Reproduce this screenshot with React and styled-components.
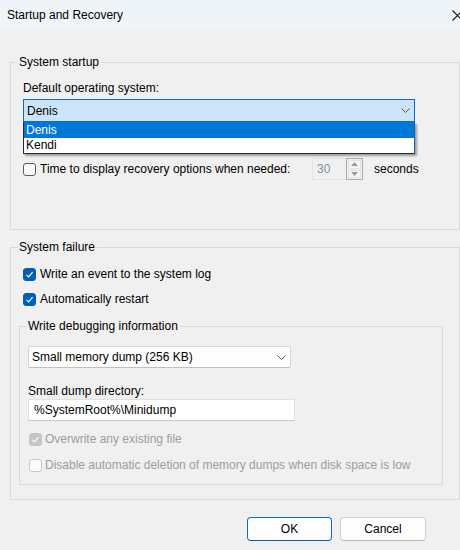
import React from 'react'
import styled, { createGlobalStyle } from 'styled-components';

const GlobalStyle = createGlobalStyle`
  body {
    margin: 0;
    font-family: "Segoe UI", "Liberation Sans", Arial, sans-serif;
    font-size: 12px;
    color: #000;
  }
`;

const Chevron = ({ color = '#555' }) => (
  <svg width="9" height="5" viewBox="0 0 9 5">
    <path d="M0.5 0.5 L4.5 4.5 L8.5 0.5" fill="none" stroke={color} strokeWidth="1" />
  </svg>
);

const Tick = ({ color = '#fff' }) => (
  <svg width="9" height="9" viewBox="0 0 9 9">
    <path d="M1.5 4.8 L3.6 6.9 L7.6 2.2" fill="none" stroke={color} strokeWidth="1.2" />
  </svg>
);

const Check = ({ checked, disabled }) => (
  <Box $checked={checked} $disabled={disabled}>
    {checked && <Tick />}
  </Box>
);

const Spin = ({ value }) => (
  <SpinBox>
    <SpinValue>{value}</SpinValue>
    <SpinButtons>
      <SpinBtn>
        <svg width="7" height="4" viewBox="0 0 7 4"><path d="M0 4 L3.5 0 L7 4 Z" fill="#9a9a9a" /></svg>
      </SpinBtn>
      <SpinBtn>
        <svg width="7" height="4" viewBox="0 0 7 4"><path d="M0 0 L3.5 4 L7 0 Z" fill="#9a9a9a" /></svg>
      </SpinBtn>
    </SpinButtons>
  </SpinBox>
);

const App = () => {
  const systems = ['Denis', 'Kendi'];
  return <Window>
    <GlobalStyle />
    <TitleBar>
      <span>Startup and Recovery</span>
      <svg width="11" height="11" viewBox="0 0 11 11">
        <path d="M0.5 0.5 L10.5 10.5 M10.5 0.5 L0.5 10.5" stroke="#1a1a1a" strokeWidth="1.2" />
      </svg>
    </TitleBar>

    <Body>
      <Group $width={450}>
        <Legend>System startup</Legend>
        <GroupContent $pad="10px 12px 49px 12px">
          <Label>Default operating system:</Label>
          <Combo>
            <ComboField>
              <span>Denis</span>
              <Chevron />
            </ComboField>
            <DropList>
              {systems.map((s, i) => (
                <DropItem key={s} $selected={i === 0}>{s}</DropItem>
              ))}
            </DropList>
          </Combo>

          {/* row hidden under the open list */}
          <Spacer $top={9} $h={22} />
          <Row $top={5} $h={22}>
            <Check />
            <RowLabel $width={268}>Time to display recovery options when needed:</RowLabel>
            <Spin value="30" />
            <Unit>seconds</Unit>
          </Row>
        </GroupContent>
      </Group>

      <Group $width={450} $top={9}>
        <Legend>System failure</Legend>
        <GroupContent $pad="9px 16px 14px 8px">
          <Row $top={0} $h={20} $indent={4}>
            <Check checked />
            <RowLabel>Write an event to the system log</RowLabel>
          </Row>
          <Row $top={5} $h={20} $indent={4}>
            <Check checked />
            <RowLabel>Automatically restart</RowLabel>
          </Row>

          <Group $top={9}>
            <Legend>Write debugging information</Legend>
            <GroupContent $pad="12px 8px 9px 8px">
              <Select>
                <span>Small memory dump (256 KB)</span>
                <Chevron />
              </Select>
              <Label $top={16} $lh={15}>Small dump directory:</Label>
              <TextInput>%SystemRoot%\Minidump</TextInput>
              <Row $top={8} $h={20} $indent={1} $gap={3} $disabled>
                <Check checked disabled />
                <RowLabel>Overwrite any existing file</RowLabel>
              </Row>
              <Row $top={6} $h={20} $indent={1} $gap={3} $disabled>
                <Check disabled />
                <RowLabel>Disable automatic deletion of memory dumps when disk space is low</RowLabel>
              </Row>
            </GroupContent>
          </Group>
        </GroupContent>
      </Group>

      <ButtonBar>
        <Button $default>OK</Button>
        <Button>Cancel</Button>
      </ButtonBar>
    </Body>
  </Window>
};

const Window = styled.div`
  width: 460px;
  height: 550px;
  overflow: hidden;
  background: #f0f0f0;
`;

const TitleBar = styled.div`
  height: 30px;
  background: #eff4f9;
  display: flex;
  align-items: center;
  justify-content: space-between;
  padding: 0 0 0 7px;
  margin-right: -3px;
  font-size: 12px;

  svg {
    flex-shrink: 0;
  }
`;

const Body = styled.div`
  padding: 24px 0 0 10px;
`;

const Group = styled.fieldset`
  box-sizing: border-box;
  width: ${({ $width }) => ($width ? `${$width}px` : 'auto')};
  margin: ${({ $top }) => $top || 0}px 0 0 0;
  padding: 0;
  min-width: 0;
  border: 1px solid #dadada;
`;

const Legend = styled.legend`
  margin-left: 6px;
  padding: 0 2px;
  line-height: 16px;
  font-size: 12px;
`;

const GroupContent = styled.div`
  padding: ${({ $pad }) => $pad};
  display: flex;
  flex-direction: column;
`;

const Label = styled.div`
  margin-top: ${({ $top }) => $top || 0}px;
  line-height: ${({ $lh }) => $lh || 16}px;
`;

const Combo = styled.div`
  position: relative;
  width: 392px;
  margin-top: 3px;
`;

const ComboField = styled.div`
  box-sizing: border-box;
  height: 23px;
  background: #cce4f7;
  border: 1px solid #0a6cc4;
  display: flex;
  align-items: center;
  justify-content: space-between;
  padding: 0 4px 0 3px;
`;

const DropList = styled.div`
  position: absolute;
  top: 100%;
  left: 0;
  width: 392px;
  box-sizing: border-box;
  background: #fff;
  border: 1px solid #2a2a2a;
  border-right-color: #1c5fa8;
  border-top: none;
  box-shadow: 2px 2px 2px rgba(0, 0, 0, 0.35);
  z-index: 2;
`;

const DropItem = styled.div`
  height: ${({ $selected }) => ($selected ? 16 : 15)}px;
  line-height: ${({ $selected }) => ($selected ? 16 : 15)}px;
  padding-left: 2px;
  background: ${({ $selected }) => ($selected ? '#0078d7' : '#fff')};
  color: ${({ $selected }) => ($selected ? '#fff' : '#000')};
`;

const Spacer = styled.div`
  height: ${({ $h }) => $h}px;
  margin-top: ${({ $top }) => $top}px;
`;

const Row = styled.div`
  display: flex;
  align-items: center;
  gap: ${({ $gap }) => ($gap === undefined ? 4 : $gap)}px;
  height: ${({ $h }) => $h}px;
  margin-top: ${({ $top }) => $top}px;
  margin-left: ${({ $indent }) => $indent || 0}px;
  color: ${({ $disabled }) => ($disabled ? '#9d9d9d' : '#000')};
  white-space: nowrap;
`;

const Box = styled.span`
  box-sizing: border-box;
  width: 13px;
  height: 13px;
  flex-shrink: 0;
  border-radius: 3px;
  display: flex;
  align-items: center;
  justify-content: center;
  background: ${({ $checked, $disabled }) =>
    $checked ? ($disabled ? '#c6c6c6' : '#005fb8') : '#fbfbfb'};
  border: 1px solid ${({ $checked, $disabled }) =>
    $checked ? ($disabled ? '#c6c6c6' : '#005fb8') : $disabled ? '#c9c9c9' : '#5a5a5a'};
`;

const RowLabel = styled.span`
  width: ${({ $width }) => ($width ? `${$width}px` : 'auto')};
  flex-shrink: 0;
  line-height: 16px;
`;

const SpinBox = styled.div`
  box-sizing: border-box;
  width: 51px;
  height: 22px;
  border: 1px solid #e3e3e3;
  display: flex;
  align-items: stretch;
`;

const SpinValue = styled.span`
  flex: 1;
  padding-left: 4px;
  line-height: 20px;
  color: #8090a4;
`;

const SpinButtons = styled.div`
  width: 17px;
  margin: -1px -1px -1px 0;
  border: 1px solid #ababab;
  box-sizing: border-box;
  display: flex;
  flex-direction: column;
  padding: 1px;
  gap: 1px;
`;

const SpinBtn = styled.div`
  flex: 1;
  background: #f5f5f5;
  border: 1px solid #e2e2e2;
  display: flex;
  align-items: center;
  justify-content: center;
`;

const Unit = styled.span`
  margin-left: 7px;
`;

const Select = styled.div`
  box-sizing: border-box;
  width: 263px;
  height: 22px;
  background: #fdfdfd;
  border: 1px solid #d4d4d4;
  border-bottom-color: #c0c0c0;
  border-radius: 2px;
  display: flex;
  align-items: center;
  justify-content: space-between;
  padding: 0 4px 0 3px;
`;

const TextInput = styled.div`
  box-sizing: border-box;
  width: 267px;
  height: 22px;
  background: #fff;
  border: 1px solid #e0e0e0;
  border-bottom-color: #c8c8c8;
  line-height: 20px;
  padding-left: 5px;
`;

const ButtonBar = styled.div`
  display: flex;
  justify-content: flex-end;
  gap: 8px;
  margin-top: 17px;
  padding-right: 34px;
`;

const Button = styled.button`
  box-sizing: border-box;
  width: ${({ $default }) => ($default ? 85 : 86)}px;
  height: 24px;
  background: #fdfdfd;
  border: 1px solid ${({ $default }) => ($default ? '#0a6cc4' : '#d0d0d0')};
  border-bottom-color: ${({ $default }) => ($default ? '#0a5bb0' : '#b8b8b8')};
  border-radius: 4px;
  font-family: inherit;
  font-size: 12px;
  color: #000;
  padding: 0;
`;

export default App;
